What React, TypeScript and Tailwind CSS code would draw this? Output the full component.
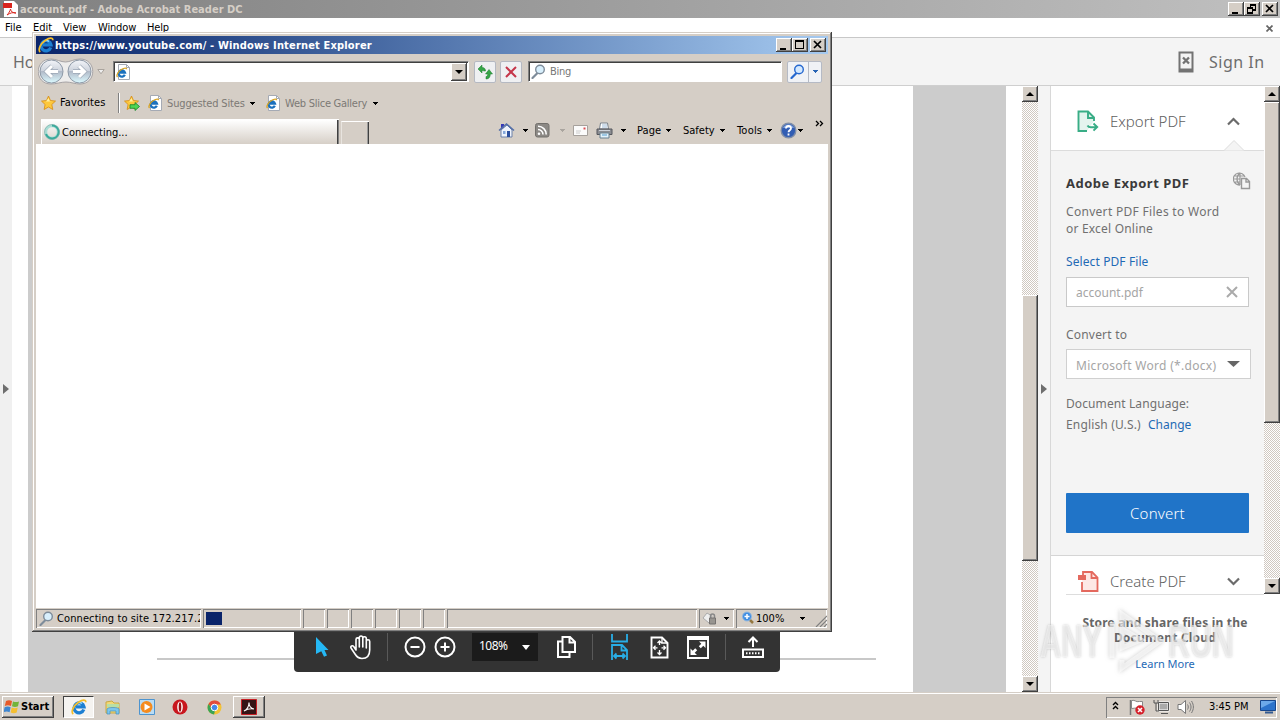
import type { ReactNode } from "react";
import clsx from "clsx";

const bevel = "bg-[#d5cec6] shadow-[inset_-1px_-1px_#404040,inset_1px_1px_#fff,inset_-2px_-2px_#808080]";
const hatch = "bg-[repeating-conic-gradient(#fff_0_25%,#d0c8c0_0_50%)] bg-[length:2px_2px]";
const sunken = "shadow-[inset_1px_1px_#808080,inset_-1px_-1px_#fff]";

function Text({ className, children }: { className?: string; children: ReactNode }) {
  return <span className={clsx("block shrink-0 whitespace-nowrap", className)}>{children}</span>;
}

function Caret({ className }: { className?: string }) {
  return (
    <svg className={clsx("shrink-0", className)} width="6" height="3" viewBox="0 0 6 3" fill="currentColor" shapeRendering="crispEdges">
      <path d="M0 0h6L3 3z" />
    </svg>
  );
}

function WinButton({ kind }: { kind: "min" | "max" | "restore" | "close" }) {
  return (
    <div className={clsx("h-[14px] w-4 shrink-0", bevel)}>
      <svg width="16" height="14" viewBox="0 0 16 14" fill="none" stroke="#000" shapeRendering="crispEdges">
        {kind === "min" && <path d="M4 11h6" strokeWidth="2" />}
        {kind === "max" && <path d="M3.500 3v7.500h8V3M3 3h9" strokeWidth="1.200" />}
        {kind === "restore" && <path d="M6 3h6M6.500 2.500v3M11.500 3v5H9M3 6h6M3.500 6v5h5V6" strokeWidth="1.300" />}
        {kind === "close" && <path d="M4 3l7 7M11 3l-7 7" strokeWidth="1.700" shapeRendering="auto" />}
      </svg>
    </div>
  );
}

function IeLogo({ size = 16, className }: { size?: number; className?: string }) {
  return (
    <svg className={clsx("shrink-0", className)} width={size} height={size} viewBox="0 0 16 16" fill="none">
      <path d="M12.800 10.500A5 5 0 1 1 13 7.800H5" stroke="#1c7fd2" strokeWidth="3.200" />
      <path d="M4.500 6a4.200 4.200 0 0 1 6.500-1.500" stroke="#9adcfb" strokeWidth="1.300" />
      <path d="M2.300 15C-.5 13 2.500 6.500 7.500 3.200 11.500.6 15 .3 14.800 3.200" stroke="#f4bd2a" strokeWidth="1.700" />
    </svg>
  );
}

function IePage({ className }: { className?: string }) {
  return (
    <svg className={clsx("shrink-0", className)} width="15" height="16" viewBox="0 0 15 16" fill="none">
      <path d="M2.500.5h8l3 3v12h-11z" fill="#fff" stroke="#a5aab4" />
      <path d="M10.500.5v3h3" stroke="#a5aab4" />
      <path d="M8.800 10.800A3.200 3.200 0 1 1 9 8.700H4" stroke="#1b70bd" strokeWidth="2.300" />
      <path d="M1.500 13C0 11.500 2 7.500 5.500 5.500c3-2 5-1.800 5-.3" stroke="#d9a422" strokeWidth="1.300" />
    </svg>
  );
}

function Magnifier({ className, color = "#7e8c9a", glass = "#d8effc" }: { className?: string; color?: string; glass?: string }) {
  return (
    <svg className={clsx("shrink-0", className)} width="15" height="15" viewBox="0 0 15 15" fill="none">
      <path d="M6 9.500L1.500 14" stroke={color} strokeWidth="2.200" strokeLinecap="round" />
      <circle cx="9" cy="5.500" r="4.300" fill={glass} stroke={color} strokeWidth="1.400" />
    </svg>
  );
}

function Star({ add, className }: { add?: boolean; className?: string }) {
  return (
    <svg className={clsx("shrink-0", className)} width="16" height="16" viewBox="0 0 16 16">
      <path d="M7.500 1l2 4.500 5 .6-3.700 3.400 1 5-4.300-2.500-4.400 2.500 1-5L.5 6.100l5-.6z" fill="#fdc83c" stroke="#d78b12" strokeWidth=".8" />
      <path d="M7.500 3l1.300 3.200 3 .4H5z" fill="#fff0a0" />
      {add && <path d="M6 9.700h5V7.500l4.500 4-4.500 4v-2.200H6z" fill="#4fd454" stroke="#15852a" strokeWidth=".8" />}
    </svg>
  );
}

function Toolbar() {
  return (
    <div className="flex h-[27px] items-stretch">
      <div className="mt-[2px] ml-[5px] flex h-[25px] w-[298px] items-center border-t border-l border-white bg-gradient-to-b from-white to-[#d6cfc7] shadow-[inset_-1px_0_#808080,inset_-2px_0_#404040]">
        <svg className="ml-[2px]" width="16" height="16" viewBox="0 0 16 16" fill="none">
          <circle cx="8" cy="8" r="6.300" stroke="#a9dcd4" strokeWidth="3" />
          <path d="M8 1.500a6.500 6.500 0 1 1-6 8.500" stroke="#36aa9b" strokeWidth="2" />
          <circle cx="8" cy="8" r="7.500" stroke="#77a9a4" strokeWidth=".6" />
        </svg>
        <Text className="mt-[2px] ml-[2px]">Connecting...</Text>
      </div>
      <div className="mt-[4px] ml-[2px] h-[23px] w-[28px] border-t border-l border-white border-l-[#e8e4df] shadow-[inset_-1px_0_#404040,inset_-2px_0_#999]" />
      <div className="mt-[4px] ml-[129px] flex h-[19px] items-center">
        <svg width="17" height="17" viewBox="0 0 17 17">
          <path d="M3 2h3v5H3z" fill="#3538b8" />
          <path d="M3 8l6-5 5 5v7H3z" fill="#eef3fc" stroke="#6c80a8" />
          <path d="M1 8.500L8.500 2 16 8.500" fill="none" stroke="#546fa8" strokeWidth="1.600" />
          <path d="M9 9h3v6H9z" fill="#2c4f9e" />
          <path d="M5 9h2.500v3H5z" fill="#86a8da" />
        </svg>
        <Caret className="ml-[7px]" />
        <svg className="ml-[7px]" width="15" height="15" viewBox="0 0 15 15" fill="none">
          <rect x=".5" y=".5" width="13.500" height="13.500" rx="2" fill="#8c8985" stroke="#73706c" />
          <circle cx="4" cy="10.700" r="1.300" fill="#fff" />
          <path d="M3 6.500a5 5 0 0 1 5 5M3 3.300a8 8 0 0 1 8.200 8.200" stroke="#fff" strokeWidth="1.600" />
        </svg>
        <Caret className="ml-[9px] text-[#aaa59f]" />
        <svg className="ml-[8px]" width="15" height="11" viewBox="0 0 15 11" fill="none">
          <path d="M.5.5h14v10H.5z" fill="#fbfbfb" stroke="#a6a19c" />
          <path d="M3 6h5M3 8h4" stroke="#ccc" />
          <path d="M10.500 2.500h2v2h-2z" fill="#dc4c50" />
        </svg>
        <svg className="ml-[8px]" width="17" height="17" viewBox="0 0 17 17">
          <path d="M4.500 1h7l1 6h-9z" fill="#fff" stroke="#77818c" />
          <path d="M6 3h5M6 5h5" stroke="#9db9d6" />
          <path d="M1 7h15v5.500H1z" fill="#8b8d92" stroke="#55575d" />
          <path d="M3 8.500h11" stroke="#cdd2da" />
          <path d="M4 11h9v5H4z" fill="#e2f2fb" stroke="#698090" />
          <path d="M6 13h5" stroke="#579ed0" />
        </svg>
        <Caret className="ml-[7px]" />
        <Text className="ml-[11px] w-[29px] tracking-[0.1px]">Page</Text>
        <Caret className="-ml-px" />
        <Text className="ml-[12px] w-[36px]">Safety</Text>
        <Caret />
        <Text className="ml-[12px] w-[30px] tracking-[0.2px]">Tools</Text>
        <Caret className="-ml-px" />
        <svg className="ml-[8px]" width="17" height="17" viewBox="0 0 17 17" fill="none">
          <circle cx="8.500" cy="8.500" r="7.300" fill="#325db3" stroke="#7e8da8" strokeWidth="1.400" />
          <path d="M3 6a6 6 0 0 1 11 0z" fill="#7ca0df" />
          <path d="M6 6.500c0-3.300 5-3.300 5-.2 0 2-2.500 2-2.500 4M8.500 11.500v2" stroke="#fff" strokeWidth="1.800" />
        </svg>
        <Caret />
      </div>
      <svg className="mt-[3px] ml-[12px]" width="9" height="8" viewBox="0 0 9 8" fill="none" stroke="#000" strokeWidth="1.300">
        <path d="M1 1l2.500 2.500L1 6M5 1l2.500 2.500L5 6" />
      </svg>
    </div>
  );
}

function Pane({ className, children }: { className: string; children?: ReactNode }) {
  return <div className={clsx("flex h-[19px] shrink-0 items-center overflow-hidden", sunken, className)}>{children}</div>;
}

function BrowserWindow() {
  return (
    <div className="absolute top-[32px] left-[32px] flex h-[600px] w-[800px] flex-col bg-[#d5cec6] p-[4px] text-[11px] leading-[14px] text-black shadow-[inset_-1px_-1px_#404040,inset_1px_1px_#d5cec6,inset_-2px_-2px_#808080,inset_2px_2px_#fff]">
      <div className="flex h-[18px] shrink-0 items-center bg-gradient-to-r from-[#0a246a] to-[#a6caf0] text-white">
        <IeLogo className="ml-[2px]" />
        <Text className="mt-px ml-[1px] font-bold tracking-[0.17px]">https://www.youtube.com/ - Windows Internet Explorer</Text>
        <div className="mr-[2px] ml-auto flex">
          <WinButton kind="min" />
          <WinButton kind="max" />
          <div className="w-[2px]" />
          <WinButton kind="close" />
        </div>
      </div>

      {/* address row */}
      <div className="flex h-[35px] shrink-0 items-center">
        <svg className="ml-[2px] shrink-0" width="56" height="28" viewBox="0 0 56 28" fill="none">
          <defs>
            <linearGradient id="orb" x1="0" y1="0" x2="0" y2="1">
              <stop offset="0" stopColor="#f3f5f9" />
              <stop offset=".48" stopColor="#ccd2dc" />
              <stop offset=".5" stopColor="#b1bac8" />
              <stop offset="1" stopColor="#dcfaff" />
            </linearGradient>
          </defs>
          <path d="M13 1C18 1 23 4 27.500 4S36 1 42 1c17 0 17 25 0 25-5 0-9-2-14-2s-10 2-15 2C-4 26-4 1 13 1z" fill="#eeedec" stroke="#a6a3a5" />
          <circle cx="13.500" cy="13.500" r="11.500" fill="url(#orb)" stroke="#8d98a6" />
          <circle cx="41.500" cy="13.500" r="11.500" fill="url(#orb)" stroke="#8d98a6" />
          <path d="M20 13.500H9M14 8l-5.500 5.500L14 19M35 13.500h11M41 8l5.500 5.500L41 19" stroke="#9da8b6" strokeWidth="4.300" />
          <path d="M20 13.500H9M14 8l-5.500 5.500L14 19M35 13.500h11M41 8l5.500 5.500L41 19" stroke="#fff" strokeWidth="3" />
        </svg>
        <svg className="ml-[3px] shrink-0" width="8" height="6" viewBox="0 0 8 6" fill="#eee" stroke="#aaa49e">
          <path d="M.8.500h6.400L4 4.800z" />
        </svg>
        <div className="ml-[8px] flex h-[21px] w-[356px] items-center border border-[#808080] border-r-white border-b-white bg-white shadow-[inset_1px_1px_#404040]">
          <IePage className="ml-[2px]" />
          <div className={clsx("mr-px ml-auto flex h-[18px] w-4 items-center justify-center", bevel)}>
            <svg width="8" height="4" viewBox="0 0 8 4">
              <path d="M0 0h8L4 4z" />
            </svg>
          </div>
        </div>
        <div className="ml-[5px] flex h-[22px] w-[22px] items-center justify-center rounded-[2px] border border-[#b5b9c2] bg-[#eff0f2]">
          <svg width="16" height="16" viewBox="0 0 16 16" fill="#37a647" stroke="#167b2b" strokeWidth=".5">
            <path d="M1 5l4-4v2.500c2.500 0 3.500 1.500 3.500 3.500H6.800C6.500 6.500 6 6.500 5 6.500V9z" />
            <path d="M12 5.500L15.500 10h-2.200c0 3-1.300 5-4.300 5v-2.500c1.300 0 1.800-1 1.800-2.500H8.500z" />
          </svg>
        </div>
        <div className="ml-[4px] flex h-[22px] w-[22px] items-center justify-center rounded-[2px] border border-[#b5b9c2] bg-[#eff0f2]">
          <svg width="12" height="12" viewBox="0 0 12 12" stroke="#c5364a" strokeWidth="2">
            <path d="M1 1l10 10M11 1L1 11" />
          </svg>
        </div>
        <div className="ml-[6px] flex h-[21px] w-[254px] items-center border border-[#808080] border-r-white border-b-white bg-white shadow-[inset_1px_1px_#404040]">
          <Magnifier className="ml-[2px]" />
          <Text className="mt-px ml-[4px] tracking-[-0.3px] text-[#777]">Bing</Text>
        </div>
        <div className="ml-[5px] flex h-[22px] w-[35px] items-center rounded-[2px] border border-[#b5bac5] bg-[#f0f2f6]">
          <Magnifier className="ml-[2px]" color="#2668cf" glass="#d4e9ff" />
          <div className="ml-[3px] flex h-full flex-1 items-center justify-center border-l border-[#b5bac5]">
            <Caret className="text-[#2864b4]" />
          </div>
        </div>
      </div>

      {/* favorites bar */}
      <div className="flex h-[28px] shrink-0 items-center">
        <Star className="ml-[5px]" />
        <Text className="ml-[3px] w-[46px] tracking-[0.1px]">Favorites</Text>
        <div className="ml-[12px] h-[20px] w-[2px] border-l border-[#808080] bg-white" />
        <Star add className="ml-[4px]" />
        <IePage className="ml-[8px]" />
        <Text className="mt-px ml-[4px] w-[82px] tracking-[-0.15px] text-[#7c7975]">Suggested Sites</Text>
        <Caret />
        <IePage className="ml-[11px]" />
        <Text className="mt-px ml-[4px] w-[87px] tracking-[-0.25px] text-[#7c7975]">Web Slice Gallery</Text>
        <Caret />
      </div>

      <Toolbar />
      <div className="min-h-0 flex-1 bg-white" />

      {/* status bar */}
      <div className="flex h-[20px] shrink-0 items-center gap-[2px]">
        <Pane className="w-[165px]">
          <Magnifier className="ml-[3px]" />
          <Text className="mt-[2px] ml-[3px] w-[143px] overflow-hidden tracking-[0.1px]">Connecting to site 172.217.21.206</Text>
        </Pane>
        <Pane className="w-[98px]">
          <div className="ml-[3px] h-[13px] w-[16px] bg-[#0a246a]" />
        </Pane>
        <Pane className="w-[22px]" />
        <Pane className="w-[22px]" />
        <Pane className="w-[22px]" />
        <Pane className="w-[22px]" />
        <Pane className="w-[22px]" />
        <Pane className="w-[22px]" />
        <Pane className="w-[250px]" />
        <Pane className="w-[35px]">
          <svg className="ml-[3px]" width="16" height="16" viewBox="0 0 16 16" fill="none">
            <path d="M1 8l4-5 5 3-3 7z" fill="#eee" stroke="#aaa" />
            <path d="M8.500 8V6a2 2 0 0 1 4 0v2" stroke="#888" strokeWidth="1.500" />
            <path d="M7.500 8h6v6h-6z" fill="#989590" stroke="#757270" />
          </svg>
          <Caret className="ml-[5px]" />
        </Pane>
        <Pane className="w-[91px]">
          <svg className="ml-[5px]" width="14" height="14" viewBox="0 0 14 14" fill="none">
            <path d="M8.500 8.500L12 12" stroke="#94773f" strokeWidth="2.500" />
            <circle cx="6" cy="5.500" r="4.500" fill="#3f8de2" stroke="#94b9df" />
            <path d="M3.500 5.500h5M6 3v5" stroke="#fff" strokeWidth="1.500" />
          </svg>
          <Text className="mt-[2px] ml-px w-[30px]">100%</Text>
          <Caret className="ml-[13px]" />
          <svg className="mt-[6px] ml-auto" width="12" height="12" viewBox="0 0 12 12">
            <path d="M1 12L12 1M5 12l7-7M9 12l3-3" stroke="#808080" strokeWidth="1.200" />
          </svg>
        </Pane>
      </div>
    </div>
  );
}

function ZoomBar() {
  return (
    <div className="absolute top-[622px] left-[294px] flex h-[50px] w-[486px] items-center rounded-b-[4px] bg-[#333] text-white">
      <svg className="ml-[21px] shrink-0" width="15" height="22" viewBox="0 0 15 22" fill="#25b8f5">
        <path d="M1 1l12.500 13H9.500l2.500 5.500-3 1.200-2.700-5.500L1 18z" />
      </svg>
      <svg className="ml-[19px] shrink-0" width="24" height="25" viewBox="0 0 24 25" fill="none" stroke="#fff" strokeWidth="1.600" strokeLinecap="round" strokeLinejoin="round">
        <path d="M7 15V4.500a1.600 1.600 0 0 1 3.300 0V12 2.800a1.700 1.700 0 0 1 3.500 0V12 3.500a1.700 1.700 0 0 1 3.500 0V13 6.500a1.700 1.700 0 0 1 3.400 0V15c0 5-2.200 8.500-7.700 8.500-4 0-5.500-2-7-4.500l-4-6c-1-2 1.500-3 2.700-1.500z" />
      </svg>
      <div className="ml-[14px] h-[28px] w-px bg-[#595959]" />
      <svg className="ml-[16px] shrink-0" width="22" height="22" viewBox="0 0 22 22" fill="none" stroke="#fff" strokeWidth="2">
        <circle cx="11" cy="11" r="9.500" />
        <path d="M6.500 11h9" />
      </svg>
      <svg className="ml-[8px] shrink-0" width="22" height="22" viewBox="0 0 22 22" fill="none" stroke="#fff" strokeWidth="2">
        <circle cx="11" cy="11" r="9.500" />
        <path d="M6.500 11h9M11 6.500v9" />
      </svg>
      <div className="ml-[16px] flex h-[28px] w-[66px] shrink-0 items-center bg-[#1b1b1b] font-['Noto_Sans'] text-[12px]">
        <Text className="mt-[-2px] ml-[7px] w-[30px] tracking-[-0.5px]">108%</Text>
        <svg className="ml-[13px]" width="8" height="5" viewBox="0 0 8 5" fill="#fff">
          <path d="M0 0h8L4 5z" />
        </svg>
      </div>
      <svg className="ml-[18px] shrink-0" width="21" height="24" viewBox="0 0 21 24" fill="none" stroke="#fff" strokeWidth="2">
        <path d="M6.500 2h7.500l5 5v10H6.500zM13.500 2v5.500H19M6 6.500H2V22h11.500v-4.500" />
      </svg>
      <div className="ml-[15px] h-[26px] w-px bg-[#595959]" />
      <svg className="ml-[17px] shrink-0" width="19" height="26" viewBox="0 0 19 26" fill="none" stroke="#29aee6" strokeWidth="1.800">
        <path d="M2 0v7.500h15V0M2 26V11h10l5 5v10M11.500 11v5.500H17M4 22h11M6.500 19.500L4 22l2.500 2.500M12.500 19.500L15 22l-2.500 2.500" />
      </svg>
      <svg className="ml-[21px] shrink-0" width="19" height="23" viewBox="0 0 19 23" fill="none" stroke="#fff" strokeWidth="1.900">
        <path d="M1.500 1.500H12l5.500 5.500v14.500h-16z" />
        <path d="M12 1.500V7h5M9.500 5v4M9.500 14v4.500M3.500 11.800h4M11.500 11.800h4M7.500 7l2-2 2 2M7.500 16.500l2 2 2-2M5.500 9.800l-2 2 2 2M13.500 9.800l2 2-2 2" strokeWidth="1.300" />
      </svg>
      <svg className="ml-[18px] shrink-0" width="22" height="23" viewBox="0 0 22 23" fill="#fff">
        <path d="M1 1h20v21H1z" fill="none" stroke="#fff" strokeWidth="2" />
        <path d="M1 1h20v3H1zM12 5.500h6.500V12l-2.200-2.200-2.500 2.500-2-2 2.500-2.500zM3.500 12.500L5.700 14.700l2.500-2.500 2 2-2.500 2.500 2.300 2.300H3.500z" />
      </svg>
      <div className="ml-[16px] h-[26px] w-px bg-[#595959]" />
      <svg className="ml-[16px] shrink-0" width="22" height="22" viewBox="0 0 22 22" fill="none" stroke="#fff" strokeWidth="2">
        <path d="M11 11V2M6.500 6L11 1.500 15.500 6M1 13.500h20V21H1z" />
        <path d="M4 17.300h14" strokeDasharray="1.500 1.500" />
      </svg>
    </div>
  );
}

function Scroller({ className, before, thumb }: { className: string; before: string; thumb: string }) {
  return (
    <div className={clsx("flex w-4 shrink-0 flex-col", hatch, className)}>
      <div className={clsx("flex h-4 shrink-0 items-center justify-center", bevel)}>
        <svg width="8" height="4" viewBox="0 0 8 4">
          <path d="M0 4h8L4 0z" />
        </svg>
      </div>
      <div className={clsx("shrink-0", before)} />
      <div className={clsx("shrink-0", bevel, thumb)} />
      <div className="flex-1" />
      <div className={clsx("flex h-4 shrink-0 items-center justify-center", bevel)}>
        <svg width="8" height="4" viewBox="0 0 8 4">
          <path d="M0 0h8L4 4z" />
        </svg>
      </div>
    </div>
  );
}

function ToolsPane() {
  return (
    <div className="flex w-[230px] shrink-0 flex-col border-l border-[#d8d8d8] bg-white font-['Noto_Sans',sans-serif]">
      <div className="flex h-[508px] shrink-0">
        <div className="flex w-[213px] flex-col overflow-hidden">
          <div className="relative flex h-[65px] shrink-0 items-center border-b border-[#dcdcdc] pt-[6px]">
            <svg className="ml-[26px]" width="22" height="23" viewBox="0 0 22 23" fill="none" stroke="#39ad86" strokeWidth="1.900">
              <path d="M10 21H1.500V1.500H11l6 6V11" fill="#e4f4ee" />
              <path d="M11 1.500V8h6M10.500 15.500c1 2 2.500 1.700 4 1.700h5M16.500 13.500l3.700 3.500-3.700 3.700" />
            </svg>
            <Text className="ml-[11px] w-[77px] text-[15px] font-light text-[#606060]">Export PDF</Text>
            <svg className="ml-[40px]" width="13" height="9" viewBox="0 0 13 9" fill="none" stroke="#6b6b6b" strokeWidth="2.200">
              <path d="M1 7.500l5.500-5.500L12 7.500" />
            </svg>
            <svg className="absolute bottom-[-1px] left-[172px]" width="22" height="11" viewBox="0 0 22 11">
              <path d="M0 10.500h1l10-10 10 10h1" fill="#f4f4f4" stroke="#dcdcdc" />
            </svg>
          </div>
          <div className="flex h-[405px] shrink-0 flex-col border-b border-[#d5d5d5] bg-[#f4f4f4] pl-[15px] text-[12px] leading-[17px] text-[#707070]">
            <div className="mt-[22px] flex h-[20px] items-center">
              <Text className="w-[125px] text-[13px] font-bold tracking-[0.5px] text-[#3a3a3a]">Adobe Export PDF</Text>
              <svg className="mt-[-4px] ml-[42px]" width="18" height="18" viewBox="0 0 18 18" fill="none" stroke="#999" strokeWidth="1.200">
                <path d="M12 5a6 6 0 1 0-5 8M7 1v12M1 7h6M2 4h9M2 10h5M7 1C3 4 3 10 7 13" />
                <path d="M8.500 6.500h5l3 3v7h-8zM13 6.500V10h3.500" fill="#f4f4f4" strokeWidth="1.400" />
              </svg>
            </div>
            <Text className="mt-[10px] tracking-[0.3px]">Convert PDF Files to Word</Text>
            <Text className="tracking-[0.2px]">or Excel Online</Text>
            <Text className="mt-[16px] tracking-[0.1px] text-[#1f6ab5]">Select PDF File</Text>
            <div className="mt-[7px] flex h-[30px] w-[183px] items-center border border-[#c9c9c9] bg-white pl-[9px] text-[#a5a5a5]">
              <Text>account.pdf</Text>
              <svg className="mr-[10px] ml-auto" width="12" height="12" viewBox="0 0 12 12" stroke="#aaa" strokeWidth="2">
                <path d="M1 1l10 10M11 1L1 11" />
              </svg>
            </div>
            <Text className="mt-[19px] tracking-[0.2px]">Convert to</Text>
            <div className="mt-[6px] flex h-[30px] w-[185px] items-center border border-[#d0d0d0] bg-white pt-[2px] pl-[9px] text-[#a5a5a5]">
              <Text className="w-[142px] tracking-[0.3px]">Microsoft Word (*.docx)</Text>
              <svg className="mb-[3px] ml-[9px]" width="13" height="6" viewBox="0 0 13 6" fill="#666">
                <path d="M0 0h13L6.500 6z" />
              </svg>
            </div>
            <Text className="mt-[16px] tracking-[0.1px]">Document Language:</Text>
            <div className="mt-[4px] flex">
              <Text className="w-[82px] tracking-[0.15px]">English (U.S.)</Text>
              <Text className="text-[#1f6ab5]">Change</Text>
            </div>
            <div className="mt-[60px] flex h-[40px] w-[183px] shrink-0 items-center justify-center rounded-[1px] bg-[#2074c8] text-[15px] font-light tracking-[0.2px] text-white">Convert</div>
          </div>
          <div className="flex flex-1 items-start pt-[14px]">
            <svg className="mt-px ml-[27px]" width="21" height="21" viewBox="0 0 21 21" fill="none" stroke="#e4695e" strokeWidth="1.800">
              <path d="M5 5V1h9l5.500 5.500V20H4v-9" fill="#fde8e5" />
              <path d="M13.500 1v6h6" />
              <path d="M0 4h8v5H0z" fill="#e4695e" stroke="none" />
            </svg>
            <Text className="ml-[11px] w-[78px] text-[15px] leading-[22px] font-light text-[#606060]">Create PDF</Text>
            <svg className="mt-[7px] ml-[39px]" width="13" height="9" viewBox="0 0 13 9" fill="none" stroke="#6b6b6b" strokeWidth="2.200">
              <path d="M1 1.500L6.500 7 12 1.500" />
            </svg>
          </div>
        </div>
        <Scroller className="h-[508px]" before="h-0" thumb="h-[321px]" />
      </div>
      <div className="ml-[15px] w-[198px] border-t border-[#ddd] text-center">
        <div className="mt-[20px] text-[12px] leading-[15px] font-bold tracking-[0.2px] whitespace-nowrap text-[#666]">
          Store and share files in the
          <br />
          Document Cloud
        </div>
        <div className="mt-[10px] text-[11px] leading-[17px] text-[#1f6ab5]">Learn More</div>
      </div>
    </div>
  );
}

function Watermark() {
  return (
    <div className="pointer-events-none absolute top-[608px] left-[1040px] flex h-[66px] w-[194px] items-center justify-between font-['Liberation_Sans',sans-serif] text-[46px] leading-none font-bold text-white/55 [text-shadow:0_0_3px_rgba(110,110,110,0.38)]">
      <span className="w-[62px] origin-left scale-x-[0.64]">ANY</span>
      <svg width="56" height="64" viewBox="0 0 56 64" fill="none" stroke="#fff" strokeOpacity=".6" strokeWidth="5" className="drop-shadow-[0_0_2px_rgba(90,90,90,0.5)]">
        <path d="M5 13v36M15 51v8l38-27L15 5v34l19-8-19-11" />
      </svg>
      <span className="w-[66px] origin-left scale-x-[0.66]">RUN</span>
    </div>
  );
}

function Taskbar() {
  return (
    <div className="flex h-[28px] shrink-0 items-center border-t border-[#d5cec6] bg-[#d5cec6] pt-px text-[11px] text-black shadow-[inset_0_1px_#fff]">
      <div className={clsx("ml-[2px] flex h-[22px] w-[52px] items-center", bevel)}>
        <svg className="ml-[2px]" width="16" height="16" viewBox="0 0 16 16">
          <path d="M2 2c2-1 4-1 6 0L7 7C5 6 3 6 .8 7z" fill="#e75a29" />
          <path d="M9 2.400c2 .9 4 .9 6 0L14 7.200c-2 1-4 1-6 0z" fill="#72b43c" />
          <path d="M.6 8.200c2-1 4-1 6 0l-1 5c-2-1-4-1-6 0z" fill="#3e86d0" />
          <path d="M7.700 8.500c2 1 4 1 6 0l-1 5c-2 1-4 1-6 0z" fill="#f5bf31" />
        </svg>
        <Text className="mt-px ml-[1px] font-bold">Start</Text>
      </div>
      <div className="ml-[9px] flex h-[22px] w-[31px] items-center justify-center border border-[#404040] border-r-white border-b-white bg-[#f5f3f0]">
        <IeLogo />
      </div>
      <svg className="ml-[11px]" width="16" height="16" viewBox="0 0 16 16">
        <path d="M1 3l6-1 2 2h5v10H1z" fill="#f2d875" stroke="#c9a844" />
        <path d="M2 5h12v3H2z" fill="#b9dfa5" />
        <path d="M2 15v-5c0-2 12-2 12 0v5h-3v-3H5v3z" fill="#7cc6ee" stroke="#4490bd" strokeWidth=".7" />
      </svg>
      <svg className="ml-[17px]" width="18" height="18" viewBox="0 0 18 18">
        <path d="M1.500 1.500h15v15h-15z" fill="#b9dcf4" stroke="#4d94cf" />
        <circle cx="8.500" cy="9" r="6" fill="#f58b1e" />
        <path d="M6.500 5.500v7l6-3.500z" fill="#fff" />
      </svg>
      <svg className="ml-[16px]" width="16" height="16" viewBox="0 0 16 16">
        <circle cx="8" cy="8" r="7.500" fill="#c8171e" />
        <ellipse cx="8" cy="8" rx="2.800" ry="5.500" fill="#fff" />
        <ellipse cx="8" cy="8" rx="1.300" ry="4.800" fill="#a00f15" />
      </svg>
      <svg className="ml-[19px]" width="15" height="15" viewBox="0 0 15 15">
        <circle cx="7.500" cy="7.500" r="7" fill="#f2c335" />
        <path d="M1.500 4a7 7 0 0 1 12.300.5H7.500L5 9z" fill="#e14b3b" />
        <path d="M1.500 4L5 9l3 2-1 3.500A7 7 0 0 1 1.500 4z" fill="#39a455" />
        <circle cx="7.500" cy="7.500" r="3.300" fill="#4688e8" stroke="#fff" />
      </svg>
      <div className={clsx("ml-[11px] flex h-[22px] w-[32px] items-center justify-center", bevel)}>
        <svg width="16" height="16" viewBox="0 0 16 16" fill="none">
          <path d="M.5.5h15v15H.5z" fill="#351516" stroke="#c51f25" />
          <path d="M3 12c3-1.500 5-5 5-8.500C8 7 10 9.500 13 10c-3-.5-7 0-10 2z" stroke="#fff" strokeWidth="1.100" />
        </svg>
      </div>
      <div className={clsx("mr-[3px] ml-auto flex h-[21px] w-[171px] items-center", sunken)}>
        <svg className="mt-[-3px] ml-[6px]" width="7" height="9" viewBox="0 0 7 9" fill="none" stroke="#000" strokeWidth="1.400">
          <path d="M1 4l2.500-2.500L6 4M1 8l2.500-2.500L6 8" />
        </svg>
        <svg className="ml-[10px]" width="16" height="16" viewBox="0 0 16 16">
          <path d="M1.500 1v15" stroke="#777" strokeWidth="1.500" />
          <path d="M2.500 1.500c4-1 4 2 8 1h3v7h-5c-2-1-4 0-6 0z" fill="#fff" stroke="#888" />
          <circle cx="11" cy="11" r="4.700" fill="#d5202a" />
          <path d="M9 9l4 4M13 9l-4 4" stroke="#fff" strokeWidth="1.600" />
        </svg>
        <svg className="ml-[8px]" width="17" height="16" viewBox="0 0 17 16" fill="none">
          <path d="M5.500 3.500h10v8h-10z" fill="#aaa" stroke="#fff" strokeWidth="2" />
          <path d="M5.500 3.500h10v8h-10zM8 14.500h7M1 1v3h4V1M3 4v8h3" stroke="#555" />
        </svg>
        <svg className="ml-[7px]" width="17" height="16" viewBox="0 0 17 16" fill="none" stroke="#777">
          <path d="M1 5.500h3L8.500 1.500v13L4 10.500H1z" fill="#fff" />
          <path d="M10.500 5.500c1 1.500 1 3.500 0 5M12.500 3.500c2 3 2 6 0 9M14.500 2c2.500 4 2.500 8 0 12" />
        </svg>
        <Text className="mt-px ml-[15px] w-[40px] tracking-[-0.05px]">3:45 PM</Text>
        <svg className="ml-[11px]" width="16" height="14" viewBox="0 0 16 14">
          <path d="M.5.5h15v10H.5z" fill="#2c73cb" stroke="#17478d" />
          <path d="M1 1h14L1 8z" fill="#6ca9e9" />
          <path d="M5 12.500h8" stroke="#345b91" strokeWidth="2" />
        </svg>
      </div>
    </div>
  );
}

export default function App() {
  return (
    <div className="relative flex h-[720px] w-[1280px] flex-col overflow-hidden bg-white font-['DejaVu_Sans_Condensed','DejaVu_Sans',sans-serif] [font-stretch:condensed]">
      <div className="flex h-[18px] shrink-0 items-center bg-gradient-to-r from-[#808080] to-[#c0c0c0] text-[11px] text-[#d5cec6]">
        <svg className="ml-[3px] shrink-0" width="15" height="16" viewBox="0 0 15 16" fill="none">
          <path d="M1 0h10l4 4v12H1z" fill="#fff" />
          <path d="M0 2h9v5H0z" fill="#d9251d" />
          <path d="M4 14c2-2 3-4 3.500-6C8 11 10 12 13 12c-3-1-6 0-9 2z" stroke="#d9251d" />
        </svg>
        <Text className="mt-[2px] ml-[2px] font-bold tracking-[0.02px]">account.pdf - Adobe Acrobat Reader DC</Text>
        <div className="mr-[2px] ml-auto flex">
          <WinButton kind="min" />
          <WinButton kind="restore" />
          <div className="w-[2px]" />
          <WinButton kind="close" />
        </div>
      </div>
      <div className="flex h-[20px] shrink-0 items-center border-b border-[#c8c8c8] pt-[2px] text-[11px] text-black">
        <Text className="ml-[5px] w-[28px]">File</Text>
        <Text className="w-[30px]">Edit</Text>
        <Text className="w-[35px]">View</Text>
        <Text className="w-[49px] tracking-[-0.15px]">Window</Text>
        <Text className="tracking-[-0.2px]">Help</Text>
        <svg className="mr-[7px] ml-auto" width="7" height="7" viewBox="0 0 7 7" stroke="#666" strokeWidth="1.700">
          <path d="M.5.5l6 6M6.500.5l-6 6" />
        </svg>
      </div>
      <div className="flex h-[48px] shrink-0 items-center border-b border-[#cfcfcf] bg-[#f4f4f4] font-['Noto_Sans',sans-serif] text-[16px] text-[#6d6d6d]">
        <Text className="ml-[13px] pt-px">Home</Text>
        <svg className="ml-auto" width="16" height="22" viewBox="0 0 16 22" fill="none" stroke="#737373">
          <path d="M1.500 1.500h13v19h-13z" strokeWidth="2" />
          <path d="M1 19h14" strokeWidth="3" />
          <path d="M5 6.500l6 6M11 6.500l-6 6" strokeWidth="2.300" />
        </svg>
        <Text className="ml-[15px] w-[71px] pt-px tracking-[0.5px]">Sign In</Text>
      </div>

      <div className="flex h-[606px] shrink-0">
        <div className="flex w-[12px] items-center bg-[#f0f0f0]">
          <svg className="ml-[3px]" width="6" height="10" viewBox="0 0 6 10" fill="#6e6e6e">
            <path d="M0 0l6 5-6 5z" />
          </svg>
        </div>
        <div className="w-[16px] bg-white" />
        <div className="flex w-[978px] bg-[#ccc] pl-[92px]">
          <div className="w-[793px] bg-white pt-[572px] pl-[37px]">
            <div className="h-[2px] w-[719px] bg-[#c8c8c8]" />
          </div>
        </div>
        <div className="w-[16px] bg-white" />
        <Scroller className="h-[606px]" before="h-[193px]" thumb="h-[266px]" />
        <div className="flex w-[12px] items-center bg-[#f4f4f4]">
          <svg className="ml-[3px]" width="6" height="10" viewBox="0 0 6 10" fill="#6e6e6e">
            <path d="M0 0l6 5-6 5z" />
          </svg>
        </div>
        <ToolsPane />
      </div>
      <Taskbar />

      <ZoomBar />
      <BrowserWindow />
      <Watermark />
    </div>
  );
}
